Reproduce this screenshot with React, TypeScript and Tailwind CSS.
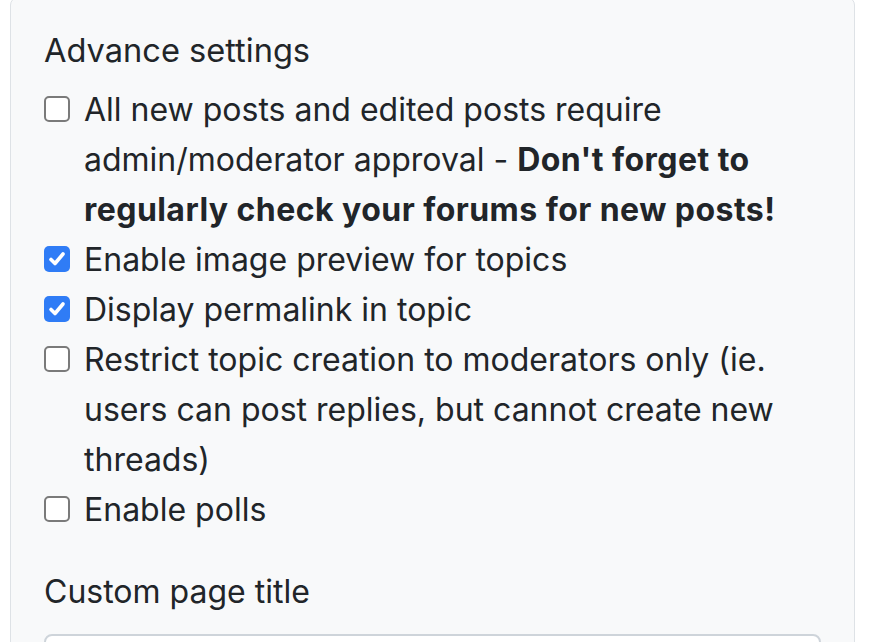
type Option = {
  id: string;
  checked: boolean;
  label: React.ReactNode;
};

const options: Option[] = [
  {
    id: "approval",
    checked: false,
    label: (
      <>
        All new posts and edited posts require admin/moderator approval -{" "}
        <strong className="font-bold tracking-[0.45px]">
          Don't forget to regularly check your forums for new posts!
        </strong>
      </>
    ),
  },
  { id: "preview", checked: true, label: "Enable image preview for topics" },
  { id: "permalink", checked: true, label: "Display permalink in topic" },
  {
    id: "restrict",
    checked: false,
    label:
      "Restrict topic creation to moderators only (ie. users can post replies, but cannot create new threads)",
  },
  { id: "polls", checked: false, label: "Enable polls" },
];

const CheckBox = ({ checked }: { checked: boolean }) => {
  if (checked) {
    return (
      <span className="mt-[11px] flex h-[26px] w-[26px] shrink-0 items-center justify-center rounded-[5px] bg-[#2f7cf6]">
        <svg width="20" height="20" viewBox="0 0 20 20" fill="none">
          <path
            d="M4 10.5 L8 14.5 L16 5"
            stroke="white"
            strokeWidth="3.6"
            strokeLinecap="round"
            strokeLinejoin="round"
          />
        </svg>
      </span>
    );
  }
  return (
    <span className="mt-[11px] h-[26px] w-[26px] shrink-0 rounded-[5px] border-[2px] border-[#7a7a7a] bg-white" />
  );
};

const App = () => {
  return (
    <div className="min-h-screen overflow-hidden bg-white font-['Inter','Noto_Sans',sans-serif] text-[#212529]">
      <div className="ml-[10px] mt-[-3px] w-[845px] rounded-[8px] border border-[#dee2e6] bg-[#f8f9fa] px-[33px] pt-[27px] pb-[40px]">
        <h5 className="mb-[10px] text-[32.6px] leading-[50px]">Advance settings</h5>
        <div className="flex flex-col">
          {options.map((option) => (
            <label key={option.id} className="flex gap-[14px] text-[32px] leading-[50px]">
              <CheckBox checked={option.checked} />
              <span>{option.label}</span>
            </label>
          ))}
        </div>
        <div className="mt-[32px] mb-[17px] text-[32px] leading-[50px]">Custom page title</div>
        <input
          type="text"
          className="block h-[80px] w-full rounded-[8px] border-2 border-[#ced4da] bg-white"
        />
      </div>
    </div>
  );
};

export default App;
